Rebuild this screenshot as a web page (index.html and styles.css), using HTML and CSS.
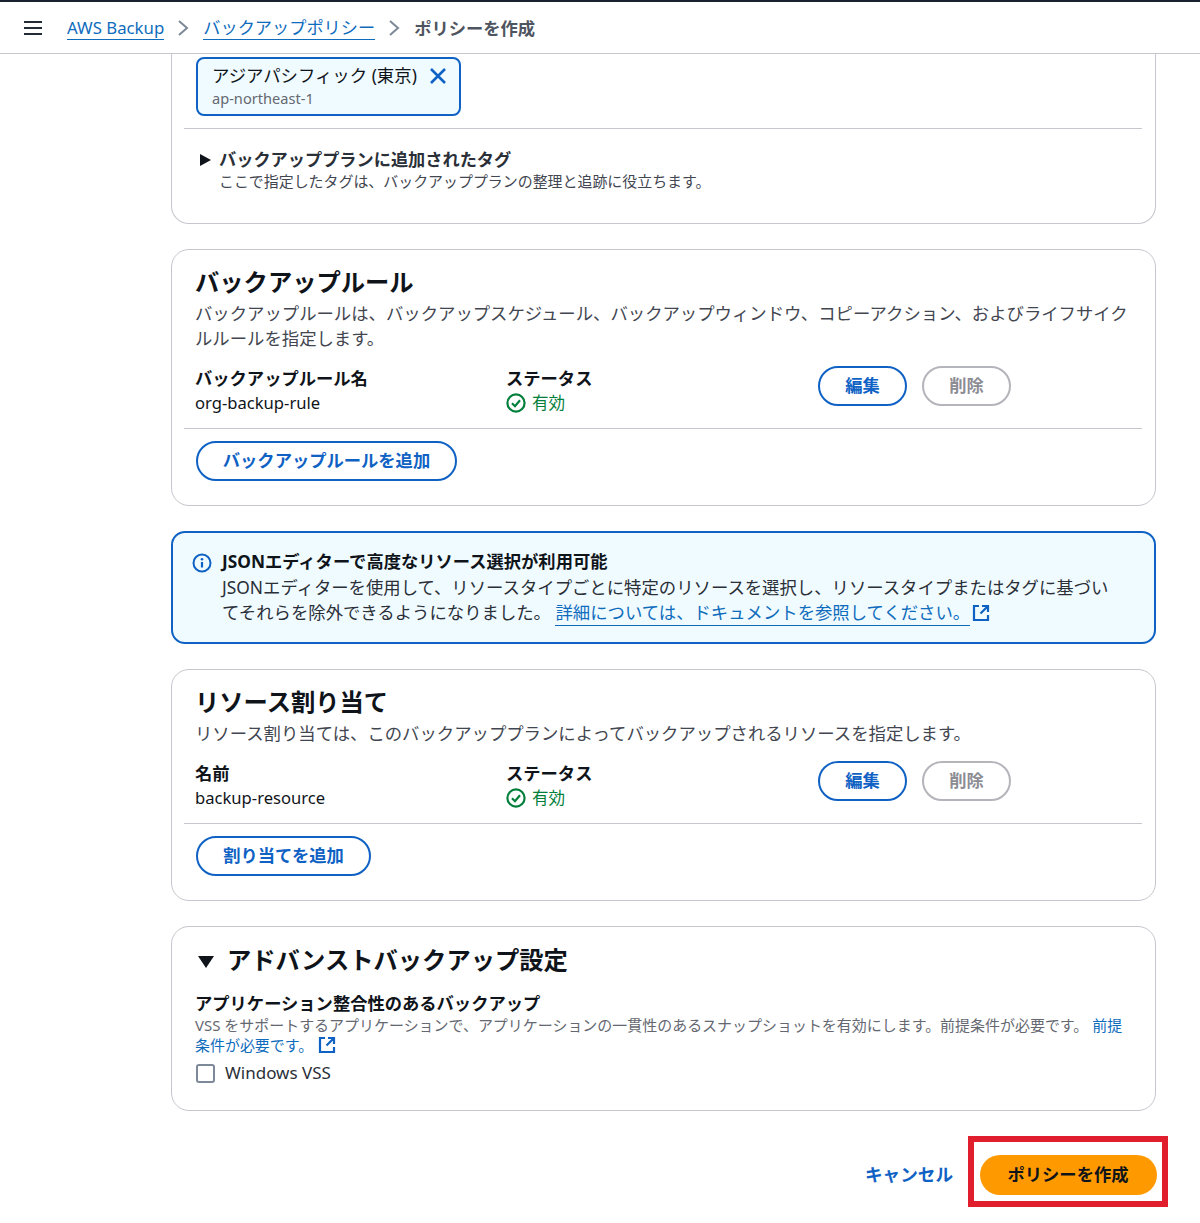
FILE: index.html
```html
<!DOCTYPE html>
<html lang="ja">
<head>
<meta charset="utf-8">
<title>ポリシーを作成</title>
<link rel="stylesheet" href="styles.css">
</head>
<body>
<header class="topbar">
  <svg class="menu-icon" width="20" height="16" viewBox="0 0 20 16"><path d="M1 2h18M1 8h18M1 14h18" stroke="#232b37" stroke-width="2.2" fill="none"/></svg>
  <a class="crumb crumb-first" href="#">AWS Backup</a>
  <svg class="chev" width="12" height="18" viewBox="0 0 12 18"><path d="M2 2l8 7-8 7" stroke="#7d8998" stroke-width="2" fill="none"/></svg>
  <a class="crumb" href="#">バックアップポリシー</a>
  <svg class="chev" width="12" height="18" viewBox="0 0 12 18"><path d="M2 2l8 7-8 7" stroke="#7d8998" stroke-width="2" fill="none"/></svg>
  <span class="crumb-current">ポリシーを作成</span>
</header>
<main class="content">
  <section class="card card-clipped">
    <div class="token">
      <div class="token-text">
        <div class="token-name">アジアパシフィック (東京)</div>
        <div class="token-sub">ap-northeast-1</div>
      </div>
      <svg class="token-x" width="18" height="18" viewBox="0 0 18 18"><path d="M2 2l14 14M16 2L2 16" stroke="#0f62c4" stroke-width="2.6" fill="none"/></svg>
    </div>
    <hr class="rule rule-token">
    <div class="tags">
      <span class="caret-right"></span>
      <div>
        <div class="tags-title">バックアッププランに追加されたタグ</div>
        <div class="tags-desc">ここで指定したタグは、バックアッププランの整理と追跡に役立ちます。</div>
      </div>
    </div>
  </section>

  <section class="card">
    <h2 class="card-title">バックアップルール</h2>
    <p class="card-desc">バックアップルールは、バックアップスケジュール、バックアップウィンドウ、コピーアクション、およびライフサイクルルールを指定します。</p>
    <div class="row">
      <div class="col-name"><div class="label">バックアップルール名</div><div class="value">org-backup-rule</div></div>
      <div class="col-status"><div class="label">ステータス</div><div class="status"><svg width="20" height="20" viewBox="0 0 20 20"><circle cx="10" cy="10" r="8.6" stroke="#037f3c" stroke-width="2.2" fill="none"/><path d="M6 10.2l3 3 5-6" stroke="#037f3c" stroke-width="2.2" fill="none"/></svg>有効</div></div>
      <div class="col-actions"><button class="btn btn-normal btn-small">編集</button><button class="btn btn-disabled btn-small">削除</button></div>
    </div>
    <hr class="rule">
    <button class="btn btn-normal btn-add btn-add-rule">バックアップルールを追加</button>
  </section>

  <section class="alert">
    <svg class="alert-icon" width="20" height="20" viewBox="0 0 20 20"><circle cx="10" cy="10" r="8.5" stroke="#0f62c4" stroke-width="2" fill="none"/><path d="M10 9v5.5" stroke="#0f62c4" stroke-width="2.2"/><circle cx="10" cy="6.2" r="1.3" fill="#0f62c4"/></svg>
    <div class="alert-body">
      <div class="alert-title">JSONエディターで高度なリソース選択が利用可能</div>
      <div class="alert-text">JSONエディターを使用して、リソースタイプごとに特定のリソースを選択し、リソースタイプまたはタグに基づいてそれらを除外できるようになりました。 <a href="#" class="link">詳細については、ドキュメントを参照してください。</a><svg class="ext ext-alert" width="18" height="18" viewBox="0 0 18 18"><path d="M7 2H2v14h14v-5M10 2h6v6M16 2L8.5 9.5" stroke="#0f62c4" stroke-width="2.2" fill="none"/></svg></div>
    </div>
  </section>

  <section class="card">
    <h2 class="card-title">リソース割り当て</h2>
    <p class="card-desc">リソース割り当ては、このバックアッププランによってバックアップされるリソースを指定します。</p>
    <div class="row">
      <div class="col-name"><div class="label">名前</div><div class="value">backup-resource</div></div>
      <div class="col-status"><div class="label">ステータス</div><div class="status"><svg width="20" height="20" viewBox="0 0 20 20"><circle cx="10" cy="10" r="8.6" stroke="#037f3c" stroke-width="2.2" fill="none"/><path d="M6 10.2l3 3 5-6" stroke="#037f3c" stroke-width="2.2" fill="none"/></svg>有効</div></div>
      <div class="col-actions"><button class="btn btn-normal btn-small">編集</button><button class="btn btn-disabled btn-small">削除</button></div>
    </div>
    <hr class="rule">
    <button class="btn btn-normal btn-add btn-add-res">割り当てを追加</button>
  </section>

  <section class="card card-advanced">
    <div class="adv-head"><span class="caret-down"></span><h2 class="adv-title">アドバンストバックアップ設定</h2></div>
    <div class="label adv-label">アプリケーション整合性のあるバックアップ</div>
    <p class="adv-desc">VSS をサポートするアプリケーションで、アプリケーションの一貫性のあるスナップショットを有効にします。前提条件が必要です。 <a href="#" class="adv-link">前提条件が必要です。</a> <svg class="ext" width="18" height="18" viewBox="0 0 18 18"><path d="M7 2H2v14h14v-5M10 2h6v6M16 2L8.5 9.5" stroke="#0f62c4" stroke-width="2.2" fill="none"/></svg></p>
    <label class="check"><span class="box"></span>Windows VSS</label>
  </section>

  <footer class="actions">
    <a href="#" class="cancel">キャンセル</a>
    <div class="highlight"><button class="btn btn-primary">ポリシーを作成</button></div>
  </footer>
</main>
</body>
</html>
```
FILE: styles.css
```css
* { box-sizing: border-box; }
html, body { margin: 0; padding: 0; }
body {
  background: #fff;
  color: #0f141a;
  font-family: "Noto Sans", "Noto Sans CJK JP", sans-serif;
  font-size: 17.36px;
  height: 1223px;
  overflow: hidden;
}
.topbar {
  height: 54px;
  border-top: 2px solid #1a2230;
  border-bottom: 1px solid #c6c6cd;
  display: flex;
  align-items: center;
  padding-left: 23px;
}
.menu-icon { margin-right: 24px; }
.crumb {
  color: #0f6cbd;
  font-size: 17.2px;
  line-height: 22px;
  margin-top: 2px;
  text-decoration: none;
  border-bottom: 1px solid #0f6cbd;
}
.crumb-first { font-size: 16.8px; }
.chev { margin: 0 14px 0 13px; }
.crumb-current { color: #4f5560; font-weight: 700; font-size: 17.3px; }
.content { width: 985px; margin-left: 171px; }
.card {
  border: 1px solid #c6c6cd;
  border-radius: 18px;
  margin-bottom: 25px;
  padding: 0 13px 0 12px;
}
.card-clipped {
  border-top: 0;
  border-radius: 0 0 18px 18px;
  height: 170px;
  padding-top: 3px;
}
.token {
  width: 265px;
  height: 59px;
  margin-left: 12px;
  border: 2px solid #0f62c4;
  border-radius: 8px;
  background: #f0fbff;
  display: flex;
  justify-content: space-between;
  padding: 4px 12px 0 14px;
}
.token-name { font-size: 17.4px; line-height: 25px; }
.token-sub { font-size: 14.6px; line-height: 20px; color: #656871; }
.token-x { margin-top: 4px; }
.rule { border: 0; border-top: 1px solid #c6c6cd; margin: 0; }
.rule-token { margin-top: 12px; }
.tags { display: flex; align-items: flex-start; padding: 20px 0 0 16px; }
.caret-right {
  width: 0; height: 0;
  margin: 5px 8px 0 0;
  border-left: 11px solid #0f141a;
  border-top: 6px solid transparent;
  border-bottom: 6px solid transparent;
}
.tags-title { font-weight: 700; font-size: 17.2px; line-height: 22px; color: #2a2f38; }
.tags-desc { font-size: 14.95px; line-height: 21px; color: #424650; }
.card-title { margin: 0 0 0 11px; padding-top: 13px; font-size: 24.3px; line-height: 38px; font-weight: 700; }
.card-desc { margin: 0 12px 0 11px; font-size: 17.36px; line-height: 25px; color: #424650; }
.row { display: flex; margin-left: 11px; height: 77px; padding-top: 16px; }
.col-name { width: 311px; }
.col-status { width: 312px; }
.label { font-weight: 700; font-size: 17.3px; line-height: 24px; }
.value { font-size: 16.6px; line-height: 23px; }
.status { display: flex; align-items: center; gap: 6px; color: #037f3c; font-size: 16.6px; line-height: 23px; }
.col-actions { display: flex; gap: 15px; margin-top: -1px; align-items: flex-start; }
.btn {
  font-family: inherit;
  font-weight: 700;
  font-size: 17.3px;
  height: 40px;
  border-radius: 20px;
  background: #fff;
  padding: 0;
  line-height: 1;
}
.btn-small { width: 89px; }
.btn-normal { border: 2px solid #0f62c4; color: #0f62c4; }
.btn-disabled { border: 2px solid #b4b4bb; color: #8c8c94; }
.btn-add { display: block; margin: 12px 0 24px 12px; }
.btn-add-rule { width: 261px; }
.btn-add-res { width: 175px; }
.alert {
  height: 113px;
  margin-bottom: 25px;
  border: 2px solid #0f62c4;
  border-radius: 14px;
  background: #f0fbff;
  display: flex;
  padding: 17px 38px 0 19px;
}
.alert-icon { margin-top: 3px; flex: none; }
.alert-body { margin-left: 10px; }
.alert-title { font-weight: 700; font-size: 17.3px; line-height: 24px; margin-bottom: 1px; }
.alert-text { font-size: 17.36px; line-height: 25px; color: #2a2f38; }
.link { color: #0f6cbd; text-decoration: none; border-bottom: 1px solid #0f6cbd; padding-bottom: 1px; }
.ext { vertical-align: -3px; margin-left: 1px; }
.ext-alert { margin-left: 2px; }
.card-advanced { height: 185px; margin-bottom: 0; padding: 0 24px 0 23px; }
.adv-head { display: flex; align-items: center; padding-top: 14px; height: 52px; }
.caret-down {
  width: 0; height: 0;
  margin: 4px 13px 0 3px;
  border-top: 12px solid #0f141a;
  border-left: 8px solid transparent;
  border-right: 8px solid transparent;
}
.adv-title { margin: 0; font-size: 24.3px; line-height: 36px; font-weight: 700; }
.adv-label { margin-top: 12px; line-height: 25px; }
.adv-desc { margin: -1px 0 0; font-size: 14.97px; line-height: 20px; color: #656871; }
.adv-link { color: #0f6cbd; text-decoration: none; }
.check { display: flex; align-items: center; gap: 10px; margin: 6px 0 0 1px; font-size: 17px; line-height: 24px; color: #2a2f38; }
.box { width: 19px; height: 19px; border: 2px solid #7d8998; border-radius: 3px; }
.actions { display: flex; justify-content: flex-end; align-items: center; width: 997px; margin-top: 25px; }
.cancel { color: #0f62c4; font-weight: 700; font-size: 17.6px; text-decoration: none; margin: 3px 15px 0 0; }
.highlight {
  width: 200px;
  height: 71px;
  border: 6px solid #e01e2d;
  padding-top: 7px;
  display: flex;
  align-items: center;
  justify-content: center;
}
.btn-primary { width: 177px; height: 40px; border: 0; background: #ff9900; color: #0f141a; }
```
